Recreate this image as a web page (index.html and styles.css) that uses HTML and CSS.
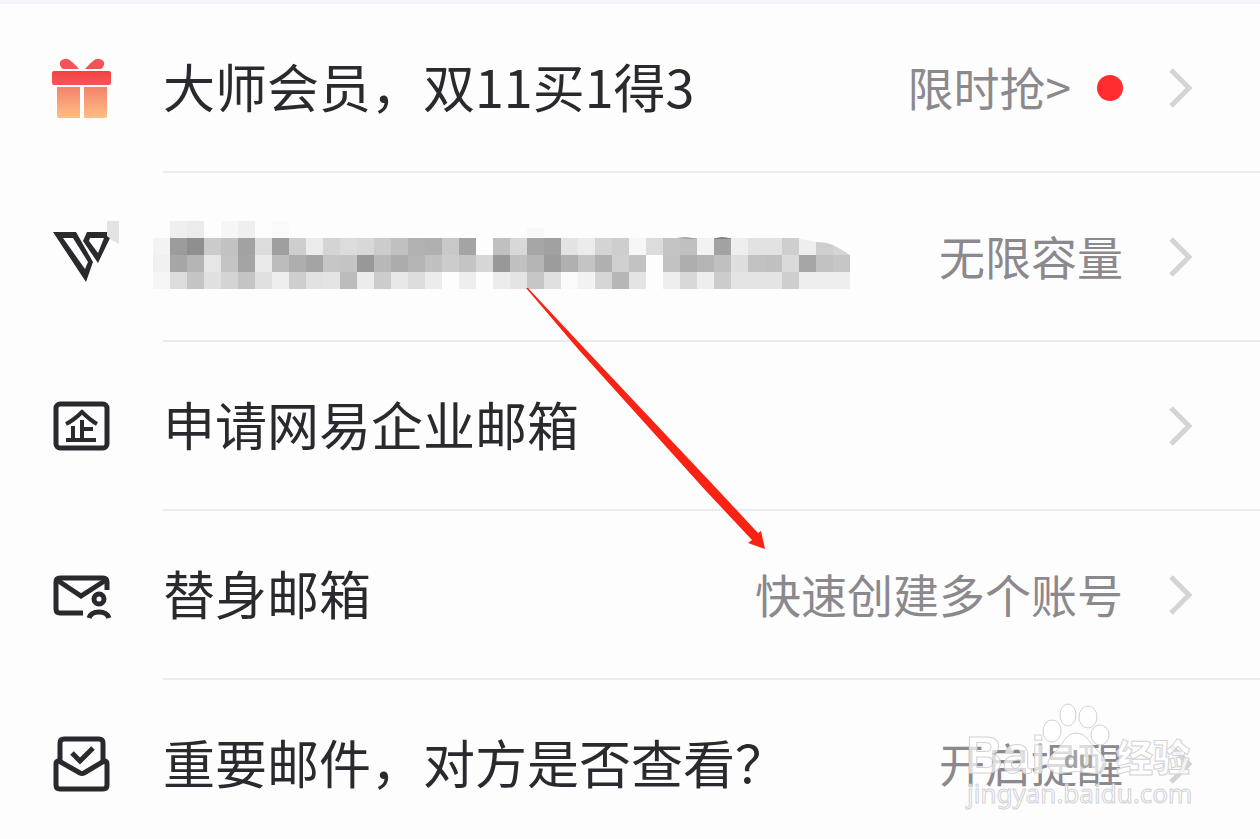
FILE: index.html
```
<!DOCTYPE html>
<html lang="zh-CN">
<head>
    <meta charset="UTF-8">
    <meta name="viewport" content="width=device-width, initial-scale=1.0">
    <title>邮箱服务</title>
    <link rel="stylesheet" href="styles.css">
</head>
<body>
    <main class="menu">
        <a class="row" href="#vip">
            <svg class="icon" viewBox="0 0 60 60" aria-hidden="true">
                <defs>
                    <linearGradient id="lid" x1="0" y1="0" x2="0" y2="1">
                        <stop offset="0" stop-color="#f4403f"/>
                        <stop offset="1" stop-color="#f5575a"/>
                    </linearGradient>
                    <linearGradient id="box" x1="0" y1="0" x2="0" y2="1">
                        <stop offset="0" stop-color="#f4836a"/>
                        <stop offset="1" stop-color="#ffbe85"/>
                    </linearGradient>
                </defs>
                <path fill="#f25558" d="M27 10H11Q7 7 8 3Q11-1 16 0Q21 3 27 10ZM33 10H49Q53 7 52 3Q49-1 44 0Q39 3 33 10Z"/>
                <rect x="0" y="12" width="59" height="14" rx="2" fill="url(#lid)"/>
                <path fill="url(#box)" d="M5 28H28V59H7Q5 59 5 57ZM32 29V59H53Q55 59 55 57V28H32Z"/>
            </svg>
            <div class="row-body">
                <span class="title">大师会员，双11买1得3</span>
                <span class="detail">限时抢&gt;</span>
                <span class="dot"></span>
                <svg class="chevron" viewBox="0 0 24 40" aria-hidden="true"><path d="M2 2L20 20L2 38"/></svg>
            </div>
        </a>

        <a class="row" href="#storage">
            <svg class="icon" viewBox="0 0 60 60" aria-hidden="true">
                <path fill="#2b292d" fill-rule="evenodd" d="M1 4H24L41 34L34 54ZM11 10L33 41L36 34L21 10Z"/>
                <path fill="#2b292d" fill-rule="evenodd" d="M35 4H55L58 10L46 35L31 13ZM38 10L37 13L46 25L52 10Z"/>
                <path fill="#e3e2e4" d="M55-7H67V16Q60 13 55 8Z"/>
            </svg>
            <div class="row-body">
                <svg class="mosaic" id="mosaic" viewBox="0 0 748 68" role="img" aria-label="邮箱账号"></svg>
                <span class="detail">无限容量</span>
                <svg class="chevron" viewBox="0 0 24 40" aria-hidden="true"><path d="M2 2L20 20L2 38"/></svg>
            </div>
        </a>

        <a class="row" href="#company">
            <svg class="icon" viewBox="0 0 60 60" aria-hidden="true">
                <rect class="line" x="4" y="7" width="51" height="44" rx="4"/>
                <path class="line thin" d="M14 27Q22 23 30 15Q38 23 45 27M30 23V43M30 32H41M21 29V43M14 43H44"/>
            </svg>
            <div class="row-body">
                <span class="title">申请网易企业邮箱</span>
                <svg class="chevron" viewBox="0 0 24 40" aria-hidden="true"><path d="M2 2L20 20L2 38"/></svg>
            </div>
        </a>

        <a class="row" href="#alias">
            <svg class="icon" viewBox="0 0 60 60" aria-hidden="true">
                <path class="line" d="M31 47H8Q4 47 4 43V16Q4 12 8 12H51Q55 12 55 16V24"/>
                <path class="line" d="M5 14L29 30L54 14"/>
                <circle class="line" cx="47" cy="33" r="5"/>
                <path class="line" d="M37 52Q39 46 47 46Q55 46 57 52"/>
            </svg>
            <div class="row-body">
                <span class="title">替身邮箱</span>
                <span class="detail">快速创建多个账号</span>
                <svg class="chevron" viewBox="0 0 24 40" aria-hidden="true"><path d="M2 2L20 20L2 38"/></svg>
            </div>
        </a>

        <a class="row" href="#receipt">
            <svg class="icon" viewBox="0 0 60 60" aria-hidden="true">
                <path class="line" d="M8 27V8Q8 4 12 4H47Q51 4 51 8V27"/>
                <path class="line" d="M7 26Q4 26 4 29V50Q4 54 8 54H51Q55 54 55 50V29Q55 26 52 26L32 38Q30 39 28 38Z"/>
                <path class="line" d="M20 18L28 26L41 13"/>
            </svg>
            <div class="row-body">
                <span class="title">重要邮件，对方是否查看？</span>
                <span class="detail">开启提醒</span>
                <svg class="chevron" viewBox="0 0 24 40" aria-hidden="true"><path d="M2 2L20 20L2 38"/></svg>
            </div>
        </a>

        <svg class="arrow" viewBox="0 0 240 262" aria-hidden="true">
            <path d="M0 0H2L59 61L191 201L232 245L235 243L239 261L222 255L226 252L180 203L52 61Z"/>
        </svg>

        <svg class="watermark" viewBox="0 0 240 120" aria-hidden="true">
            <g class="mark">
                <text class="brand" x="2" y="70">Bai</text>
                <ellipse cx="88" cy="28" rx="9" ry="11"/>
                <ellipse cx="104" cy="12" rx="8" ry="11"/>
                <ellipse cx="124" cy="14" rx="9" ry="11"/>
                <ellipse cx="136" cy="32" rx="9" ry="10"/>
                <path d="M112 30Q120 30 126 39Q131 46 138 52Q144 59 140 66Q137 72 127 70Q112 67 99 70Q89 72 85 65Q82 58 88 52Q95 46 99 39Q105 30 112 30Z"/>
                <text class="cn" x="152" y="69">经验</text>
                <text class="url" x="3" y="100">jingyan.baidu.com</text>
            </g>
            <text class="du" x="100" y="65">du</text>
        </svg>
    </main>
    <script src="script.js"></script>
</body>
</html>
```
FILE: styles.css
```
* {
    box-sizing: border-box;
}

body {
    margin: 0;
    background-color: #fdfdfe;
    font-family: "Noto Sans CJK SC", sans-serif;
    color: #2b292d;
}

.menu {
    position: relative;
    border-top: 4px solid #f5f3f7;
}

.row {
    display: flex;
    padding-left: 52px;
    color: inherit;
    text-decoration: none;
}

.icon {
    flex: none;
    width: 60px;
    height: 60px;
    margin-top: 55px;
    overflow: visible;
}

.line {
    fill: none;
    stroke: #2b292d;
    stroke-width: 5;
}

.thin {
    stroke-width: 4;
}

.row-body {
    display: flex;
    flex: 1;
    align-items: center;
    min-width: 0;
    height: 169px;
    margin-left: 51px;
    padding-right: 67px;
    border-bottom: 2px solid #ebeaed;
    line-height: 64px;
}

.row:last-of-type .row-body {
    border-bottom-color: transparent;
}

/* the last row runs under the bottom edge */
.row:last-of-type {
    height: 159px;
    overflow: hidden;
}

.title {
    margin-right: auto;
    padding-bottom: 4px;
    font-size: 52px;
    white-space: nowrap;
}

.detail {
    margin-left: auto;
    padding-bottom: 4px;
    color: #8b898d;
    font-size: 46px;
    white-space: nowrap;
}

.dot {
    width: 26px;
    height: 26px;
    margin-left: 26px;
    border-radius: 50%;
    background-color: #ff2d2e;
}

.chevron {
    flex: none;
    width: 24px;
    height: 40px;
    margin-left: 46px;
    fill: none;
    stroke: #d4d3d6;
    stroke-width: 5;
}

.mosaic {
    flex: none;
    width: 748px;
    height: 68px;
    margin-bottom: 4px;
    margin-left: -44px;
}

.arrow {
    position: absolute;
    top: 284px;
    left: 526px;
    width: 240px;
    height: 262px;
    fill: #f92314;
    pointer-events: none;
}

.watermark {
    position: absolute;
    right: 56px;
    bottom: 16px;
    width: 240px;
    height: 120px;
    pointer-events: none;
}

.mark {
    fill: #ffffff;
    fill-opacity: 0.7;
    stroke: #d2d2d4;
    stroke-width: 1;
}

.brand {
    font: bold 51px "Liberation Sans", sans-serif;
}

.du {
    fill: #a3a2a5;
    font: bold 24px "Liberation Sans", sans-serif;
}

.cn {
    font: 900 37px "Noto Sans CJK SC", sans-serif;
}

.url {
    font: 26px "Noto Sans", sans-serif;
}
```
FILE: script.js
```
// Grey levels of the masked account, 17px cells, -- is an empty cell
const cells = [
    [1, 0, 'ef eb -- f6 ef -- fa'],
    [0, 1, 'f3 9c 8f cb c2 a2 dc 9f ce eb d4 dc d8 cc c0 b2 b0 c8 a4 -- c0 d8 a6 a0 e3 ec d4 ce f6 dc c4 c0 f2 a2 ee e2 e2 ce'],
    [0, 2, 'f0 a6 b4 e6 c4 a4 ea bc ae a4 c6 c4 98 b8 ac b4 c0 cc c4 d6 98 c0 b4 9c b0 c4 b0 d0 c2 -- c2 ae b4 c0 de c2 c0 da a6 c2 c6'],
    [0, 3, 'f6 dc c4 e0 d4 c4 e0 ee ce e2 e4 bc ec cc e8 dc ec -- ee -- ec e4 c6 e0 fa f2 d6 b6 e4 -- ee d8 ee cc e4 e4 e4 ce ee ee ee']
];
const mosaic = document.getElementById('mosaic');
const left = 34;
const size = 17;

function addShape(d, grey) {
    const path = document.createElementNS('http://www.w3.org/2000/svg', 'path');
    path.setAttribute('d', d);
    path.setAttribute('fill', '#' + grey + grey + grey);
    mosaic.appendChild(path);
}

cells.forEach(([start, row, levels]) => {
    levels.split(' ').forEach((grey, i) => {
        if (grey === '--') return;
        const x = left + (start + i) * size;
        addShape(`M${x} ${row * size}h17v17h-17z`, grey);
    });
});

// Rounded end of the mask
addShape('M680 18Q690 19 697 21V34H680Z', 'ee');
addShape('M697 21Q707 21 714 24V34H697Z', 'ce');
addShape('M714 24Q722 28 731 34H714Z', 'd4');
addShape('M408 7h17v10h-17z', 'f8');
addShape('M558 17Q568 15 578 18Z', '8c');
addShape('M595 18Q603 14 612 18Z', '80');
```
